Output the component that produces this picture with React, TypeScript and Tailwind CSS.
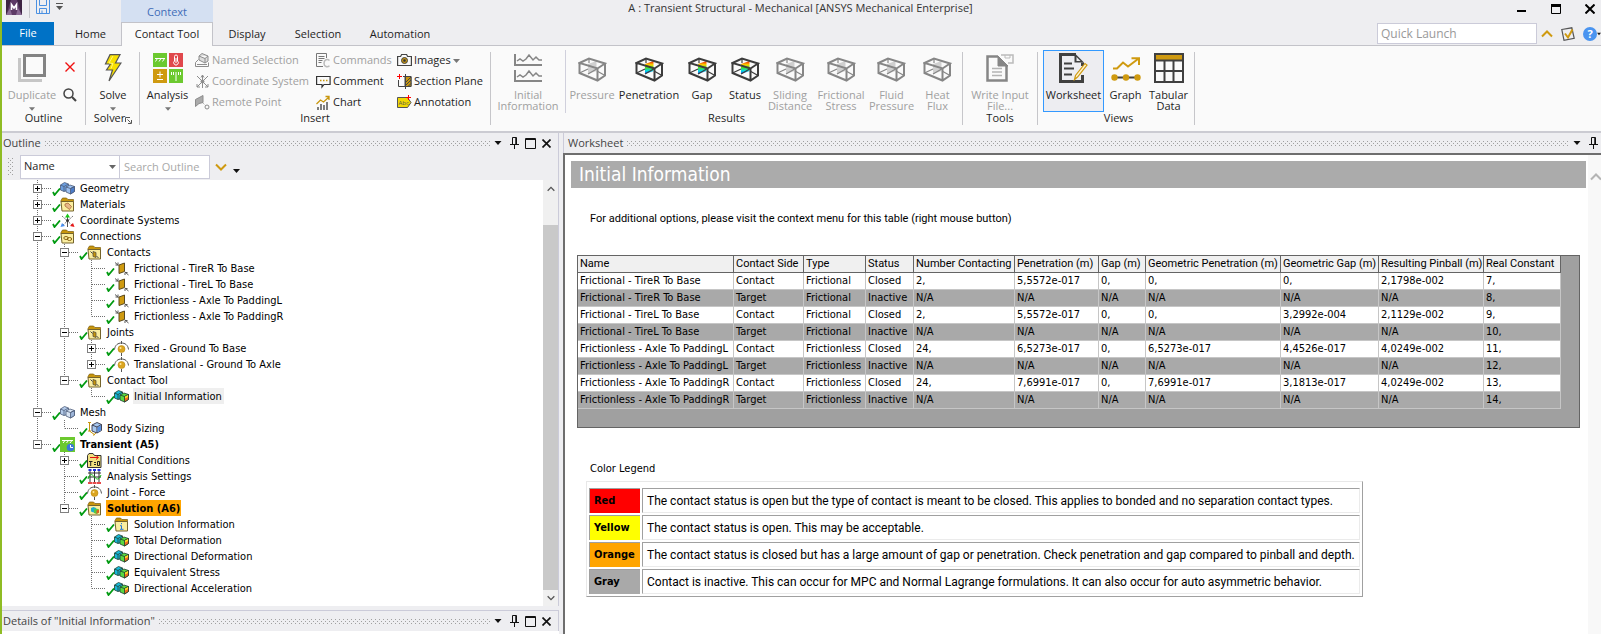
import React from "react";
import clsx from "clsx";

const UI = "font-['Open_Sans','Noto_Sans',sans-serif]";
const BODY = "font-['DejaVu_Sans_Condensed','DejaVu_Sans',sans-serif]";
const NARROW = "font-['Roboto','Liberation_Sans',sans-serif]";

type IconProps = React.SVGProps<SVGSVGElement>;

/* ---------- title bar icons ---------- */

const AppLogo = () => (
  <svg aria-hidden="true" width="16" height="15" viewBox="0 0 16 15">
    <rect width="16" height="15" fill="#3d2443" />
    <path d="M0 15 5 0h6l5 15z" fill="#5d3a66" />
    <path d="M0 15 4 8l2 7zM16 15l-4-7-2 7z" fill="#8a6a94" />
    <path d="M5.500 10V4.500L8 8l2.500-3.500V10" fill="none" stroke="#fff" strokeWidth="1.600" />
  </svg>
);

const SaveIcon = () => (
  <svg aria-hidden="true" width="14" height="14" viewBox="0 0 14 14" fill="none" stroke="#4a90e2">
    <path d="M.5-1v14.500h13V-1M3.500-1v6.500h7V-1M3.500 13.500v-5h7v5M6 13v-2.500" />
  </svg>
);

const Arrow = ({ className }: { className?: string }) => (
  <svg aria-hidden="true" width="7" height="4" viewBox="0 0 7 4" className={className}>
    <path d="M0 0h7L3.500 4z" fill="currentColor" />
  </svg>
);

const Chevron = ({ className }: { className?: string }) => (
  <svg aria-hidden="true" width="12" height="8" viewBox="0 0 12 8" className={className}>
    <path d="M1 1.500 6 6.500l5-5" fill="none" stroke="currentColor" strokeWidth="2" />
  </svg>
);

/* ---------- ribbon icons ---------- */

const DuplicateIcon = () => (
  <svg aria-hidden="true" width="28" height="28" viewBox="0 0 28 28" fill="none">
    <path d="M1.500 4v22.500H24" stroke="#c6c6c6" strokeWidth="3" />
    <rect x="6.500" y="1.500" width="20" height="20" stroke="#838383" strokeWidth="3" />
  </svg>
);

const SolveIcon = () => (
  <svg aria-hidden="true" width="18" height="28" viewBox="0 0 18 28">
    <path
      d="M6 .7h10L11.500 9h5.500L5 27l3.500-11H2.500l4-6H1.500z"
      fill="#f8e000"
      stroke="#555"
      strokeWidth="1.200"
    />
    <path d="M9 2 5 9l4 .5-2 5" fill="none" stroke="#fff780" />
  </svg>
);

const AnalysisIcon = () => (
  <svg aria-hidden="true" width="30" height="30" viewBox="0 0 30 30" fill="none" stroke="#fff">
    <path d="M0 0h14v14H0z" fill="#6cc92f" stroke="none" />
    <path d="M16 0h14v14H16z" fill="#e0484c" stroke="none" />
    <path d="M0 16h14v14H0z" fill="#cf9a10" stroke="none" />
    <path d="M16 16h14v14H16z" fill="#6cc92f" stroke="none" />
    <path d="M2 5.500h10M4.500 5.500l-2 3M8 5.500l-2 3M11.500 5.500l-2 3" />
    <path d="M21.500 8V3.500a1.500 1.500 0 0 1 3 0V8a2.300 2.300 0 1 1-3 0M23 5v5" />
    <path d="M4 21.500h6M7 18.500v6M4 26.500h6" />
    <path d="M18.500 19v3M20.500 19v3M23 19v9M25.500 19v3M27.500 19v3" />
  </svg>
);

const NamedSelectionIcon = () => (
  <svg aria-hidden="true" width="15" height="15" viewBox="0 0 15 15" fill="none" stroke="#8c8c8c">
    <path d="m4 3 3-2.500 6 2.500v5l-3 2-6-3zM4 3l6 2.500L13 3M10 5.500V10" fill="#ddd" />
    <path d="M.5 9.500v4h13v-4M.5 9.500l3-3M2 11.500h10" />
  </svg>
);

const CoordinateIcon = () => (
  <svg aria-hidden="true" width="15" height="15" viewBox="0 0 15 15" fill="none" stroke="#8c8c8c">
    <path d="M7.500 1v13M2 2l11 11M13 2 2 13" />
    <path d="M6 3.500 7.500 1 9 3.500M10 13h3v-3M2 10v3h3" />
    <circle cx="7.500" cy="7.500" r="1.500" fill="#8c8c8c" />
  </svg>
);

const RemotePointIcon = () => (
  <svg aria-hidden="true" width="15" height="15" viewBox="0 0 15 15" fill="none" stroke="#8c8c8c">
    <path d="M.5 4.500 8 .5v7l-4 1-3.500 3z" fill="#aaa" />
    <path d="m7 7 3.500 3.500" strokeDasharray="1 1" />
    <circle cx="12" cy="12" r="2" />
  </svg>
);

const CommandsIcon = () => (
  <svg aria-hidden="true" width="15" height="15" viewBox="0 0 15 15" fill="none" stroke="#777">
    <path d="M7 13.500H.5V.5h10V5" />
    <path d="M2.500 3.500h6M2.500 5.500h6M2.500 7.500h4M2.500 9.500h3" />
    <path d="M13.500 7.500c-2-2-5.500-1-5.500 2.700s3.500 4.300 5.500 2.500" stroke="#bbb" strokeWidth="1.500" />
  </svg>
);

const CommentIcon = () => (
  <svg aria-hidden="true" width="15" height="15" viewBox="0 0 15 15" fill="none" stroke="#333">
    <path d="M.6 2.500h13.500v8H8l-2 2.500v-2.500H.6z" strokeWidth="1.200" />
    <path d="M4 6.500h1.500M7 6.500h1.500M10 6.500h1.500" stroke="#c8960c" strokeWidth="1.500" />
  </svg>
);

const ChartIcon = () => (
  <svg aria-hidden="true" width="15" height="15" viewBox="0 0 15 15" fill="none" stroke="#555">
    <path d="M2 15v-3M5 15V9M8 15v-5M11 15V7" strokeWidth="1.500" />
    <path d="m.5 9 4-4 3 2 5.500-5M9.500 1.500H13V5" stroke="#c8960c" strokeWidth="1.300" />
  </svg>
);

const ImagesIcon = () => (
  <svg aria-hidden="true" width="15" height="15" viewBox="0 0 15 15" fill="none" stroke="#444">
    <path d="M.6 3.500h3l1-2h5l1 2h3.800v9H.6z" strokeWidth="1.200" />
    <circle cx="7.500" cy="7.500" r="3" fill="#c8960c" />
    <circle cx="7.500" cy="7.500" r="1" fill="#333" />
  </svg>
);

const SectionPlaneIcon = () => (
  <svg aria-hidden="true" width="15" height="15" viewBox="0 0 15 15" fill="none" stroke="#444">
    <path d="M1.500 6v6.500h12.500V2.500H6" />
    <path d="M8 2.500h6v10H8z" fill="#c8960c" />
    <path d="m8 9 6-6M8 12l6-6M11 12.500l3-3M8.500 0v15" />
    <path d="M2.500 0v5M0 2.500h5" stroke="#f00" />
  </svg>
);

const AnnotationIcon = () => (
  <svg aria-hidden="true" width="15" height="15" viewBox="0 0 15 15">
    <path d="M.5 2.500h10l3.500 5-3.500 5H.5z" fill="#f0d800" stroke="#555" />
    <text x="1.500" y="10" fontSize="6" fill="#555" fontFamily="Open Sans">
      Abc
    </text>
    <path d="M11.500 0v5M9 2.500h5" stroke="#f00" />
  </svg>
);

const InitialInfoIcon = () => (
  <svg aria-hidden="true" width="28" height="28" viewBox="0 0 28 28" fill="none" stroke="#868686">
    <path d="M1 0v11h27M1 16v11h27" strokeWidth="2" />
    <path d="m3 7 3-2 3 2 3-2 3-4 4 5 3-3 3 3h3M3 23l3-2 3 2 3-2 3-4 4 5 3-3 3 3h3" strokeWidth="1.500" />
  </svg>
);

const ResultIcon = ({ disabled }: { disabled?: boolean }) => (
  <svg
    aria-hidden="true"
    width="29"
    height="27"
    viewBox="0 -2 29 27"
    fill="none"
    stroke={disabled ? "#868686" : "#3c3c3c"}
  >
    <defs>
      <linearGradient id="contour" x1="0" y1="0" x2="0" y2="1">
        <stop offset="0.05" stopColor="#f03000" />
        <stop offset="0.3" stopColor="#ffd800" />
        <stop offset="0.5" stopColor="#50d820" />
        <stop offset="0.75" stopColor="#00e0e8" />
        <stop offset="1" stopColor="#2040f0" />
      </linearGradient>
    </defs>
    <path d="M10 7 18.500 4v10L10 17z" fill={disabled ? "#d0d0d0" : "url(#contour)"} stroke="none" />
    <path d="M1.500 6 11 1.500 27 6.500 19.500 11.500zM1.500 6v10l18 7.500 7.500-5v-12M19.500 11.500v12" strokeWidth="2" />
    <path d="M11 1.500V6M1.500 16 10 12M19 14l8 4.500M10 17l9.500-5.500" strokeWidth="1.200" />
  </svg>
);

const WriteInputIcon = () => (
  <svg aria-hidden="true" width="28" height="28" viewBox="0 0 28 28" fill="none" stroke="#868686">
    <path d="M15 1h12v8h-5" stroke="#bbb" strokeWidth="1.500" />
    <path d="M19 1v3h5V1" stroke="#bbb" />
    <path d="M12 2.500H1.500v24h19V12" strokeWidth="2.500" />
    <path d="M12 2v10h10z" fill="#868686" />
    <path d="M6 14.500h10M6 18h10M6 21.500h10" stroke="#b4b4b4" strokeWidth="1.500" />
  </svg>
);

const WorksheetIcon = () => (
  <svg aria-hidden="true" width="29" height="30" viewBox="0 0 29 30" fill="none" stroke="#404040">
    <path d="M17 1.500H1.500v27h22V22M23.500 9.500V13" strokeWidth="3" />
    <path d="M15.500 0 25 9.500h-9.500z" fill="#404040" stroke="none" />
    <path d="m17.500 4 4 4h-4z" fill="#eee" stroke="none" />
    <path d="M5 10.500h8M5 15.500h10M5 21.500h8" strokeWidth="2" />
    <path d="m15.500 26.500 1-4L26 10.500l2 1.500-9.500 12z" fill="#fff3cf" stroke="#cf9a10" strokeWidth="1.200" />
  </svg>
);

const GraphIcon = () => (
  <svg aria-hidden="true" width="30" height="27" viewBox="0 -2 30 27" fill="none" stroke="#cf9a10">
    <path d="m2 11.500 4 0 6-6 5 4L27 2M20.500 1.200H28V8" strokeWidth="2" />
    <path d="M3 20.500h24" stroke="#404040" strokeWidth="2" />
    <g fill="#cf9a10" stroke="none">
      <circle cx="3.500" cy="20.500" r="3.200" />
      <circle cx="15" cy="20.500" r="3.200" />
      <circle cx="26.500" cy="20.500" r="3.200" />
    </g>
  </svg>
);

const TabularIcon = () => (
  <svg aria-hidden="true" width="30" height="30" viewBox="0 0 30 30" fill="none" stroke="#404040">
    <path d="M1 1h28v6H1z" fill="#cf9a10" stroke="none" />
    <path d="M1 1h28v28H1zM1 7.500h28M1 18h28M10.500 8v21M19.500 8v21" strokeWidth="2" />
  </svg>
);

/* ---------- outline tree icons ---------- */

const TreeSvg = ({ children, ...props }: IconProps) => (
  <svg
    aria-hidden="true"
    width="15"
    height="15"
    viewBox="0 0 15 15"
    fill="none"
    className="mt-px shrink-0"
    {...props}
  >
    {children}
  </svg>
);

const Folder = ({ children }: { children?: React.ReactNode }) => (
  <TreeSvg>
    <path d="M1 3.500 2.500 1h4L8 2.500h5.500V5H1z" fill="#c8960c" stroke="#7a5c10" strokeWidth=".7" />
    <path d="M1 4.500h12.500v9.500H2z" fill="#fbeea0" stroke="#75642c" />
    {children}
  </TreeSvg>
);

const ContactGlyph = () => (
  <>
    <path d="m6 6.500 3 1v5l-3-1z" fill="#c8960c" stroke="#444" strokeWidth=".7" />
    <path d="m3.500 6.500 2 2M9.500 11l2 2" stroke="#444" />
  </>
);

const Blocks = ({ light, rainbow }: { light?: boolean; rainbow?: boolean }) => {
  const left = rainbow ? "#18b8d8" : light ? "#b4cbea" : "#6c9fe0";
  const mid = rainbow ? "#58d840" : light ? "#d8e4f4" : "#9cc0f0";
  const right = rainbow ? "#f06820" : light ? "#9cb4d8" : "#4c7cc8";
  return (
    <TreeSvg strokeWidth=".8" strokeLinejoin="round" stroke={rainbow ? "#204030" : "#4c5c78"}>
      <path d="m.5 4 4-2.500 4 1.500v6L4 10.500.5 9z" fill={left} />
      <path d="m.5 4 3.500 1.500L8.500 3M4 5.500v5" />
      <path d="m6 6 4-2 4.500 1.500v5L10.500 13 6 11z" fill={mid} />
      <path d="M10.500 7.500V13l4-2.500v-5z" fill={right} />
      <path d="m6 6 4.500 1.500 4-2" />
      {rainbow && <path d="m11 7.500 3-1.500v2l-3 1.500z" fill="#f8e020" stroke="none" />}
    </TreeSvg>
  );
};

const JointIcon = () => (
  <TreeSvg stroke="#555">
    <path d="M.5 8.500C1 4 4 2 7.500 2s6.500 2 7 6.500M7.500 0v3M7.500 12v3" />
    <circle cx="7.500" cy="8" r="3.500" fill="#dba520" stroke="#b88a10" strokeWidth=".6" />
    <circle cx="6.500" cy="7" r="1" fill="#ffe9a0" stroke="none" />
  </TreeSvg>
);

const ICONS = {
  geometry: <Blocks />,
  mesh: <Blocks light />,
  result: <Blocks rainbow />,
  joint: <JointIcon />,
  materials: (
    <Folder>
      <path d="m5 7 3-1 3.500 3.500-2 3L5 9z" fill="#e8b888" stroke="#a06030" strokeWidth=".7" />
    </Folder>
  ),
  coordinates: (
    <TreeSvg>
      <path d="m2 3 11 10M13 3 2 13" stroke="#777" strokeDasharray="2 1" />
      <path d="M7.500 14V4" stroke="#555" />
      <path d="M5 4.500 7.500.5l2.500 4z" fill="#18c818" />
      <path d="M14.500 14 10 13l3-3z" fill="#e81818" />
      <path d="M.5 14 5 13l-3-3z" fill="#4890f0" />
      <circle cx="7.500" cy="7.500" r="1.500" fill="#333" />
    </TreeSvg>
  ),
  connections: (
    <Folder>
      <ellipse cx="6" cy="9" rx="2.200" ry="1.500" stroke="#8a6410" />
      <ellipse cx="9.500" cy="10" rx="2.200" ry="1.500" stroke="#8a6410" />
    </Folder>
  ),
  contactFolder: (
    <Folder>
      <ContactGlyph />
    </Folder>
  ),
  contact: (
    <TreeSvg stroke="#555">
      <path d="m1 1.500 3.500 3M11 11l3.500 3" />
      <path d="M4 1.500V4H1.500M11 14v-2.500h2.500" />
      <path d="m5 4 5.500-2v8.500L5 12.500z" fill="#cf9a10" stroke="#5a4a20" />
    </TreeSvg>
  ),
  sizing: (
    <TreeSvg>
      <path d="M1 1.500h3M2.500 1.500V10L8 14M1 10h3M6 14.500 9 12" stroke="#c8960c" />
      <path d="m5 4 5-2.500 4.500 2v6L10 12 5 10z" fill="#a8c8f0" stroke="#334" strokeWidth=".9" />
      <path d="m5 4 5 2 4.500-2.500M10 6v6" stroke="#334" strokeWidth=".9" />
      <path d="m10.500 6.500 3.500-2v4.800l-3.500 2z" fill="#5890e0" />
    </TreeSvg>
  ),
  transient: (
    <TreeSvg>
      <path d="M0 0h15v15H0z" fill="#6cc92f" />
      <path d="M2 3.500h11M5 3.500l-2 2.500M8.500 3.500l-2 2.500M12 3.500 10 6" stroke="#fff" />
      <circle cx="10.500" cy="10.500" r="3.800" fill="#3c78d8" />
      <path d="M10.500 8v2.500H13" stroke="#fff" />
    </TreeSvg>
  ),
  initial: (
    <TreeSvg>
      <path d="M.5 14.500v-12L2 .5h4l1.500 2h6.500v12z" fill="#f0e080" stroke="#333" />
      <path d="M3 4.500h8M9 2.500l2.500 2L9 6.500" stroke="#e01010" />
      <path d="M2 8.500h3.500M3.700 8.500v4.500M7 9.500h2M7 11.500h2M10.500 8.500h2v4h-2z" stroke="#222" />
    </TreeSvg>
  ),
  settings: (
    <TreeSvg>
      <path d="M3 2v11M7.500 2v11M12 2v11M1 8h13M1 4h13" stroke="#333" />
      <path d="M1.500 1h3M6 1h3M10.500 1h3" stroke="#2030e0" strokeWidth="2" />
      <path d="M1 10c2-6 4-5 6.500-2S12 11 14 6" stroke="#10b810" />
      <path d="M1 14h4M5.500 14h4M10 14h4" stroke="#e01010" strokeWidth="1.500" />
    </TreeSvg>
  ),
  solution: (
    <Folder>
      <path d="m4 7 2.500-1L9 7v3.500l-2.500 1L4 10.500z" fill="#20b0c8" />
      <path d="m7 8.500 2.500-1 2.500 1v3L9.500 13 7 12z" fill="#58c840" />
      <path d="m9.500 9.500 2.500-1v3L9.500 13z" fill="#e06020" />
    </Folder>
  ),
  info: (
    <Folder>
      <path d="M7.500 6v1.200M6 8.700h1.500V12M6 12.300h3.500" stroke="#2878d8" />
    </Folder>
  ),
};

const CheckMark = () => (
  <svg aria-hidden="true" width="9" height="8" viewBox="0 0 9 8" fill="none" className="mt-2 ml-px -mr-px shrink-0">
    <path d="m1 4 1.500 3L8 .5" stroke="#009a10" strokeWidth="1.800" />
  </svg>
);

/* ---------- outline tree ---------- */

type TreeNode = {
  label: string;
  icon: keyof typeof ICONS;
  children?: TreeNode[];
  collapsed?: boolean;
  look?: "selected" | "bold" | "solution";
};

const TREE: TreeNode[] = [
  { label: "Geometry", icon: "geometry", collapsed: true },
  { label: "Materials", icon: "materials", collapsed: true },
  { label: "Coordinate Systems", icon: "coordinates", collapsed: true },
  {
    label: "Connections",
    icon: "connections",
    children: [
      {
        label: "Contacts",
        icon: "contactFolder",
        children: [
          { label: "Frictional - TireR To Base", icon: "contact" },
          { label: "Frictional - TireL To Base", icon: "contact" },
          { label: "Frictionless - Axle To PaddingL", icon: "contact" },
          { label: "Frictionless - Axle To PaddingR", icon: "contact" },
        ],
      },
      {
        label: "Joints",
        icon: "contactFolder",
        children: [
          { label: "Fixed - Ground To Base", icon: "joint", collapsed: true },
          { label: "Translational - Ground To Axle", icon: "joint", collapsed: true },
        ],
      },
      {
        label: "Contact Tool",
        icon: "contactFolder",
        children: [{ label: "Initial Information", icon: "result", look: "selected" }],
      },
    ],
  },
  { label: "Mesh", icon: "mesh", children: [{ label: "Body Sizing", icon: "sizing" }] },
  {
    label: "Transient (A5)",
    icon: "transient",
    look: "bold",
    children: [
      { label: "Initial Conditions", icon: "initial", collapsed: true },
      { label: "Analysis Settings", icon: "settings" },
      { label: "Joint - Force", icon: "joint" },
      {
        label: "Solution (A6)",
        icon: "solution",
        look: "solution",
        children: [
          { label: "Solution Information", icon: "info" },
          { label: "Total Deformation", icon: "result" },
          { label: "Directional Deformation", icon: "result" },
          { label: "Equivalent Stress", icon: "result" },
          { label: "Directional Acceleration", icon: "result" },
        ],
      },
    ],
  },
];

const Guide = ({ path, sign }: { path: string; sign?: "+" | "-" }) => (
  <svg aria-hidden="true" width="27" height="16" viewBox="0 0 27 16" fill="none" className="block">
    <path d={path} stroke="#707070" strokeDasharray="1 1" />
    {sign && (
      <>
        <rect x="9.500" y="4.500" width="8" height="8" fill="#fff" stroke="#808080" />
        <path d={sign === "+" ? "M11 8.500h5M13.500 6v5" : "M11 8.500h5"} stroke="#000" />
      </>
    )}
  </svg>
);

function TreeItem({ node, guides, last }: { node: TreeNode; guides: boolean[]; last: boolean }) {
  const sign = node.collapsed ? "+" : node.children ? "-" : undefined;
  const path = last ? "M13.500 0v8.500M14 8.500h13" : "M13.500 0v16M14 8.500h13";

  return (
    <li role="treeitem" aria-expanded={sign ? sign === "-" : undefined}>
      <div className="flex h-4 items-stretch">
        {guides.map((open, i) => (
          <Guide key={i} path={open ? "M13.500 0v16" : ""} />
        ))}
        {sign ? (
          <button type="button" aria-label={`Toggle ${node.label}`}>
            <Guide path={path} sign={sign} />
          </button>
        ) : (
          <Guide path={path} />
        )}
        <CheckMark />
        {ICONS[node.icon]}
        <span
          className={clsx("ml-1 px-px leading-[18px] whitespace-nowrap", {
            "bg-[#efefef] pr-0.5": node.look === "selected",
            "font-bold": node.look === "bold",
            "bg-[#ffa500] px-0.5 font-bold": node.look === "solution",
          })}
        >
          {node.label}
        </span>
      </div>
      {node.children && (
        <ul role="group">
          {node.children.map((child, i) => (
            <TreeItem
              key={child.label}
              node={child}
              guides={[...guides, !last]}
              last={i === node.children!.length - 1}
            />
          ))}
        </ul>
      )}
    </li>
  );
}

/* ---------- ribbon ---------- */

interface RibbonButtonProps {
  icon: React.ReactNode;
  lines: string[];
  width: string;
  disabled?: boolean;
  active?: boolean;
  menu?: boolean;
}

function RibbonButton({ icon, lines, width, disabled, active, menu }: RibbonButtonProps) {
  return (
    <button
      type="button"
      disabled={disabled}
      className={clsx(
        "flex h-[62px] shrink-0 flex-col items-center",
        width,
        disabled ? "text-[#a0a0a0]" : "text-[#1e1e1e]",
        active && "bg-[#ededf1] outline -outline-offset-1 outline-[#3399ff]"
      )}
    >
      <span className="flex h-[39px] shrink-0 items-center pb-[3px]">{icon}</span>
      {lines.map((line) => (
        <span key={line} className="leading-[11px] whitespace-nowrap">
          {line}
        </span>
      ))}
      {menu && <Arrow className="mt-[7px] w-[6px] shrink-0 text-[#777]" />}
    </button>
  );
}

function SmallButton({
  icon,
  label,
  disabled,
  menu,
}: {
  icon: React.ReactNode;
  label: string;
  disabled?: boolean;
  menu?: boolean;
}) {
  return (
    <button
      type="button"
      disabled={disabled}
      className={clsx(
        "flex h-[21px] items-center gap-0.5 whitespace-nowrap",
        disabled ? "text-[#a0a0a0]" : "text-[#1e1e1e]"
      )}
    >
      {icon}
      {label}
      {menu && <Arrow className="text-[#777]" />}
    </button>
  );
}

function RibbonGroup({
  label,
  className,
  launcher,
  children,
}: {
  label: string;
  className: string;
  launcher?: boolean;
  children: React.ReactNode;
}) {
  return (
    <>
      <section aria-label={label} className={clsx("flex shrink-0 flex-col", className)}>
        <div className="flex h-[62px]">{children}</div>
        <div className="flex h-3 items-center justify-center text-[#1e1e1e]">
          {label}
          {launcher && (
            <svg aria-hidden="true" width="7" height="7" viewBox="0 0 7 7" className="mt-1" fill="none">
              <path d="M.5 5V.5H5M2.500 2.500l3 3M6.500 3v3.500H3" stroke="#555" />
            </svg>
          )}
        </div>
      </section>
      <div className="mt-0.5 h-[73px] w-px shrink-0 bg-[#c6c6ca]" />
    </>
  );
}

const RESULTS = [
  { lines: ["Pressure"], width: "w-[52px]", disabled: true },
  { lines: ["Penetration"], width: "w-[62px]" },
  { lines: ["Gap"], width: "w-[44px]" },
  { lines: ["Status"], width: "w-[42px]" },
  { lines: ["Sliding", "Distance"], width: "w-[48px]", disabled: true },
  { lines: ["Frictional", "Stress"], width: "w-[54px]", disabled: true },
  { lines: ["Fluid", "Pressure"], width: "w-[47px]", disabled: true },
  { lines: ["Heat", "Flux"], width: "w-[45px]", disabled: true },
];

function Ribbon() {
  return (
    <div className="flex h-[87px] shrink-0 border-b-2 border-[#cbcbd2] bg-[#fafafa] pt-1">
      <RibbonGroup label="Outline" className="w-[83px]">
        <RibbonButton icon={<DuplicateIcon />} lines={["Duplicate"]} width="w-[60px]" disabled menu />
        <div className="flex w-4 flex-col items-center">
          <button type="button" aria-label="Delete" className="mt-3">
            <svg width="10" height="10" viewBox="0 0 10 10">
              <path d="m.5.5 9 9M9.500.5l-9 9" stroke="#f01010" strokeWidth="1.400" />
            </svg>
          </button>
          <button type="button" aria-label="Find" className="mt-4">
            <svg width="14" height="14" viewBox="0 0 14 14" fill="none" stroke="#444">
              <circle cx="5.500" cy="5.500" r="4.500" strokeWidth="1.500" />
              <path d="m9 9 4 4" strokeWidth="2.200" />
            </svg>
          </button>
        </div>
      </RibbonGroup>
      <RibbonGroup label="Solver" className="w-[53px] pl-px" launcher>
        <RibbonButton icon={<SolveIcon />} lines={["Solve"]} width="w-full" menu />
      </RibbonGroup>
      <RibbonGroup label="Insert" className="w-[350px]">
        <RibbonButton icon={<AnalysisIcon />} lines={["Analysis"]} width="w-[55px]" menu />
        <div className="w-[121px]">
          <SmallButton icon={<NamedSelectionIcon />} label="Named Selection" disabled />
          <SmallButton icon={<CoordinateIcon />} label="Coordinate System" disabled />
          <SmallButton icon={<RemotePointIcon />} label="Remote Point" disabled />
        </div>
        <div className="w-[81px]">
          <SmallButton icon={<CommandsIcon />} label="Commands" disabled />
          <SmallButton icon={<CommentIcon />} label="Comment" />
          <SmallButton icon={<ChartIcon />} label="Chart" />
        </div>
        <div>
          <SmallButton icon={<ImagesIcon />} label="Images" menu />
          <SmallButton icon={<SectionPlaneIcon />} label="Section Plane" />
          <SmallButton icon={<AnnotationIcon />} label="Annotation" />
        </div>
      </RibbonGroup>
      <RibbonGroup label="Results" className="w-[471px]">
        <RibbonButton icon={<InitialInfoIcon />} lines={["Initial", "Information"]} width="w-[74px]" disabled />
        <div className="h-[63px] w-px bg-[#d0d0dc]" />
        {RESULTS.map((item) => (
          <RibbonButton
            key={item.lines.join(" ")}
            icon={<ResultIcon disabled={item.disabled} />}
            lines={item.lines}
            width={item.width}
            disabled={item.disabled}
          />
        ))}
      </RibbonGroup>
      <RibbonGroup label="Tools" className="w-[74px]">
        <RibbonButton icon={<WriteInputIcon />} lines={["Write Input", "File..."]} width="w-full" disabled />
      </RibbonGroup>
      <RibbonGroup label="Views" className="w-[156px] pl-[5px]">
        <RibbonButton icon={<WorksheetIcon />} lines={["Worksheet"]} width="w-[61px]" active />
        <RibbonButton icon={<GraphIcon />} lines={["Graph"]} width="w-[43px]" />
        <RibbonButton icon={<TabularIcon />} lines={["Tabular", "Data"]} width="w-[43px]" />
      </RibbonGroup>
    </div>
  );
}

function TitleBar() {
  return (
    <header className="flex h-[22px] shrink-0">
      <div className="flex flex-1">
        <div className="flex w-[119px] items-start pl-1">
          <AppLogo />
          <div className="mr-1.5 ml-[7px] h-[18px] w-px bg-[#c8c8cc]" />
          <button type="button" aria-label="Save">
            <SaveIcon />
          </button>
          <button type="button" aria-label="Customize toolbar" className="mt-[3px] ml-1.5 text-[#555]">
            <span className="mb-0.5 block h-px w-[7px] bg-[#555]" />
            <Arrow />
          </button>
        </div>
        <div className="w-[92px] bg-[#d4e0f2] text-center leading-6 text-[#3f6db8]">Context</div>
      </div>
      <h1 className="pl-1 text-[11px] leading-4 text-[#333]">
        A : Transient Structural - Mechanical [ANSYS Mechanical Enterprise]
      </h1>
      <div className="flex flex-1 items-start justify-end gap-6 pt-1 pr-1.5 text-black">
        <button type="button" aria-label="Minimize">
          <svg width="10" height="10" viewBox="0 0 10 10">
            <path d="M0 7h9" stroke="currentColor" strokeWidth="2" />
          </svg>
        </button>
        <button type="button" aria-label="Maximize">
          <svg width="10" height="10" viewBox="0 0 10 10" fill="none" stroke="currentColor">
            <path d="M.5.5h9v9h-9z" />
            <path d="M0 1.500h10" strokeWidth="3" />
          </svg>
        </button>
        <button type="button" aria-label="Close">
          <svg width="10" height="10" viewBox="0 0 10 10">
            <path d="m.5.5 9 9M9.500.5l-9 9" stroke="currentColor" strokeWidth="2" />
          </svg>
        </button>
      </div>
    </header>
  );
}

function TabStrip() {
  return (
    <nav className="flex h-6 shrink-0 border-b border-[#c3c3c9] text-[11px] text-[#1e1e1e]">
      <button type="button" className="w-[52px] bg-[#0072c6] text-white">
        File
      </button>
      <button type="button" className="ml-1.5 w-[61px] pt-0.5">
        Home
      </button>
      <button
        type="button"
        aria-current="page"
        className="-mb-px w-[92px] border border-b-0 border-[#c3c3c9] bg-[#fafafa]"
      >
        Contact Tool
      </button>
      <button type="button" className="w-[68px] pt-0.5">
        Display
      </button>
      <button type="button" className="w-[74px] pt-0.5">
        Selection
      </button>
      <button type="button" className="w-[90px] pt-0.5">
        Automation
      </button>
      <div className="ml-auto flex items-center">
        <input
          type="text"
          aria-label="Quick Launch"
          placeholder="Quick Launch"
          className="h-[21px] w-[160px] border border-[#cbcbd9] bg-white px-[3px] text-[12px] placeholder:text-[#999]"
        />
        <button type="button" aria-label="Collapse ribbon" className="ml-1 text-[#cf9a10]">
          <Chevron className="rotate-180" />
        </button>
        <button type="button" aria-label="Options" className="ml-2">
          <svg width="14" height="14" viewBox="0 0 14 14" fill="none">
            <path d="m.8 2.500 10-1.700 2.400 10.500-10.200 2z" stroke="#555" strokeWidth="1.200" />
            <path d="m4 6.500 3 4 4.500-8" stroke="#cf9a10" strokeWidth="2" />
          </svg>
        </button>
        <button
          type="button"
          aria-label="Help"
          className="ml-2 h-[14px] w-[14px] rounded-full bg-[#4a94f0] text-[11px] leading-[14px] font-bold text-white"
        >
          ?
        </button>
        <Arrow className="w-1" />
      </div>
    </nav>
  );
}

/* ---------- docked panels ---------- */

const Pin = () => (
  <svg width="9" height="12" viewBox="0 0 9 12" fill="none" stroke="currentColor">
    <path d="M2.500 7V.5h4V7M0 7.500h9M4.500 8v4" />
    <path d="M6 1v6" strokeWidth="1.500" />
  </svg>
);

function PanelHeader({ title, full }: { title: string; full?: boolean }) {
  return (
    <div
      className={clsx(
        "flex h-5 shrink-0 items-center text-[#444]",
        full ? "pr-[7px] pl-px" : "pr-[3px] pl-1"
      )}
    >
      <h2 className="text-[11px] whitespace-nowrap">{title}</h2>
      <svg aria-hidden="true" height="5" className="mx-1 w-full min-w-0 flex-1">
        <rect width="100%" height="5" fill="url(#grip)" />
      </svg>
      <div className="flex items-center gap-2 text-[#111]">
        <button type="button" aria-label={`${title} menu`}>
          <Arrow className="w-2" />
        </button>
        <button type="button" aria-label={`Pin ${title}`}>
          <Pin />
        </button>
        {full && (
          <>
            <button type="button" aria-label={`Maximize ${title}`} className="-ml-0.5">
              <svg width="11" height="11" viewBox="0 0 11 11" fill="none" stroke="currentColor">
                <path d="M.5.5h10v10H.5zM0 1.500h11" />
              </svg>
            </button>
            <button type="button" aria-label={`Close ${title}`} className="-ml-0.5">
              <svg width="9" height="9" viewBox="0 0 9 9">
                <path d="m.5.5 8 8M8.500.5l-8 8" stroke="currentColor" strokeWidth="1.700" />
              </svg>
            </button>
          </>
        )}
      </div>
    </div>
  );
}

function OutlinePanel() {
  return (
    <aside className="flex w-[557px] shrink-0 flex-col">
      <div className="flex flex-1 flex-col border-r border-[#cbcbd9]">
        <PanelHeader title="Outline" full />
        <div className="flex h-[27px] shrink-0 items-center pl-1.5">
          <svg aria-hidden="true" width="6" height="17">
            <rect width="6" height="17" fill="url(#grip)" />
          </svg>
          <div className="relative ml-1.5">
            <select
              aria-label="Filter by"
              className="h-6 w-[100px] appearance-none border border-[#cbcbd9] bg-white px-[3px] text-[#1e1e1e]"
            >
              <option>Name</option>
            </select>
            <Arrow className="pointer-events-none absolute top-2.5 right-1 text-[#666]" />
          </div>
          <input
            type="text"
            aria-label="Search Outline"
            placeholder="Search Outline"
            className="h-6 w-[90px] border border-l-0 border-[#cbcbd9] bg-white px-1 placeholder:text-[#a8a8a8]"
          />
          <button type="button" aria-label="Expand filters" className="ml-[5px] text-[#cf9a10]">
            <Chevron />
          </button>
          <button type="button" aria-label="More filters" className="mt-2 ml-1.5 text-[#111]">
            <Arrow />
          </button>
        </div>
        <div className="flex flex-1 bg-white">
          <ul role="tree" className={clsx("flex-1 pb-2.5 pl-[22px] text-[11px] text-black", BODY)}>
            {TREE.map((node, i) => (
              <TreeItem key={node.label} node={node} guides={[]} last={i === TREE.length - 1} />
            ))}
          </ul>
          <div className="flex w-[15px] flex-col items-center bg-[#f0f0f0] text-[#555]">
            <Chevron className="mt-[5px] w-2 rotate-180" />
            <div className="mt-8 w-full flex-1 bg-[#c9c9c9]" />
            <Chevron className="my-1 w-2" />
          </div>
        </div>
      </div>
      <div className="mt-1 border-t border-r border-[#cbcbd9]">
        <PanelHeader title={'Details of "Initial Information"'} full />
      </div>
      <div className="h-1 bg-white" />
    </aside>
  );
}

/* ---------- worksheet ---------- */

const COLUMNS = [
  { title: "Name", width: "w-[156px]" },
  { title: "Contact Side", width: "w-[70px]" },
  { title: "Type", width: "w-[62px]" },
  { title: "Status", width: "w-[48px]" },
  { title: "Number Contacting", width: "w-[101px]" },
  { title: "Penetration (m)", width: "w-[84px]" },
  { title: "Gap (m)", width: "w-[47px]" },
  { title: "Geometric Penetration (m)", width: "w-[135px]" },
  { title: "Geometric Gap (m)", width: "w-[98px]" },
  { title: "Resulting Pinball (m)", width: "w-[105px]" },
  { title: "Real Constant", width: "w-[77px]" },
];

const NA = ["N/A", "N/A", "N/A", "N/A", "N/A", "N/A"];

const ROWS = [
  ["Frictional - TireR To Base", "Contact", "Frictional", "Closed", "2,", "5,5572e-017", "0,", "0,", "0,", "2,1798e-002", "7,"],
  ["Frictional - TireR To Base", "Target", "Frictional", "Inactive", ...NA, "8,"],
  ["Frictional - TireL To Base", "Contact", "Frictional", "Closed", "2,", "5,5572e-017", "0,", "0,", "3,2992e-004", "2,1129e-002", "9,"],
  ["Frictional - TireL To Base", "Target", "Frictional", "Inactive", ...NA, "10,"],
  ["Frictionless - Axle To PaddingL", "Contact", "Frictionless", "Closed", "24,", "6,5273e-017", "0,", "6,5273e-017", "4,4526e-017", "4,0249e-002", "11,"],
  ["Frictionless - Axle To PaddingL", "Target", "Frictionless", "Inactive", ...NA, "12,"],
  ["Frictionless - Axle To PaddingR", "Contact", "Frictionless", "Closed", "24,", "7,6991e-017", "0,", "7,6991e-017", "3,1813e-017", "4,0249e-002", "13,"],
  ["Frictionless - Axle To PaddingR", "Target", "Frictionless", "Inactive", ...NA, "14,"],
];

const LEGEND = [
  {
    name: "Red",
    color: "bg-[#ff0000]",
    text: "The contact status is open but the type of contact is meant to be closed. This applies to bonded and no separation contact types.",
  },
  {
    name: "Yellow",
    color: "bg-[#ffff00]",
    text: "The contact status is open. This may be acceptable.",
  },
  {
    name: "Orange",
    color: "bg-[#ffa500]",
    text: "The contact status is closed but has a large amount of gap or penetration. Check penetration and gap compared to pinball and depth.",
  },
  {
    name: "Gray",
    color: "bg-[#a9a9a9]",
    text: "Contact is inactive. This can occur for MPC and Normal Lagrange formulations. It can also occur for auto asymmetric behavior.",
  },
];

function ContactTable() {
  return (
    <div className="mt-7 mr-2 ml-3 border border-[#646464] bg-[#a0a0a0] pb-[18px]">
      <table className="w-[983px] table-fixed border-separate border-spacing-0 text-left">
        <thead>
          <tr>
            {COLUMNS.map((col) => (
              <th
                key={col.title}
                className={clsx(
                  "h-[17px] border-r border-b border-[#646464] bg-[#f0f0f0] p-0 pl-0.5 leading-4 font-normal whitespace-nowrap",
                  NARROW,
                  col.width
                )}
              >
                {col.title}
              </th>
            ))}
          </tr>
        </thead>
        <tbody>
          {ROWS.map((row, r) => (
            <tr key={r} className={r % 2 ? "bg-[#a9a9a9]" : "bg-white"}>
              {row.map((cell, c) => (
                <td
                  key={c}
                  className="h-[17px] border-r border-b border-[#c6c6c6] p-0 pl-0.5 leading-4 whitespace-nowrap"
                >
                  {cell}
                </td>
              ))}
            </tr>
          ))}
        </tbody>
      </table>
    </div>
  );
}

function WorksheetPanel() {
  return (
    <main className="ml-1 flex min-w-0 flex-1 flex-col border-l border-[#cbcbd9]">
      <PanelHeader title="Worksheet" />
      <div className="-ml-px flex flex-1 border-t-2 border-l-2 border-[#6e6e6e] bg-white">
        <div className={clsx("min-w-0 flex-1 pt-1.5 pb-9 text-[11px] text-black", BODY)}>
          <h2 className="mr-0.5 ml-1.5 h-[27px] bg-[#ababab] pl-2 text-[19px] leading-[27px] text-white">
            Initial Information
          </h2>
          <p className={clsx("mt-[23px] ml-[25px] leading-4", NARROW)}>
            For additional options, please visit the context menu for this table (right mouse button)
          </p>
          <ContactTable />
          <p className="mt-[33px] ml-[25px] leading-4">Color Legend</p>
          <table
            className={clsx(
              "mt-1 ml-[21px] border-separate border-spacing-[2px] border border-t-[#e8e8e8] border-r-[#a0a0a0] border-b-[#a0a0a0] border-l-[#e8e8e8] pt-1 text-[12px]",
              NARROW
            )}
          >
            <tbody>
              {LEGEND.map((row) => (
                <tr key={row.name}>
                  <th
                    scope="row"
                    className={clsx(
                      "h-[25px] w-[51px] border-t border-l border-[#a0a0a0] p-0 pl-1 text-left text-[11px] font-bold",
                      BODY,
                      row.color
                    )}
                  >
                    {row.name}
                  </th>
                  <td className="h-[25px] border border-t-[#a0a0a0] border-r-[#ebebeb] border-b-[#ebebeb] border-l-[#a0a0a0] p-0 px-1 whitespace-nowrap">
                    {row.text}
                  </td>
                </tr>
              ))}
            </tbody>
          </table>
        </div>
        <div className="w-[13px] overflow-hidden bg-[#f8f8f8] pt-[18px] pl-0.5 text-[#b4b4b4]">
          <Chevron className="rotate-180" />
        </div>
      </div>
    </main>
  );
}

export default function App() {
  return (
    <div
      className={clsx(
        "flex min-h-screen flex-col overflow-hidden border-l-2 border-[#8fbc24] bg-[#eeeef1] text-[11px]",
        UI
      )}
    >
      <svg aria-hidden="true" width="0" height="0" className="absolute">
        <pattern id="grip" width="4" height="4" patternUnits="userSpaceOnUse">
          <path d="M0 0h1v1H0zM2 2h1v1H2z" fill="#a0a0a0" />
        </pattern>
      </svg>
      <TitleBar />
      <TabStrip />
      <Ribbon />
      <div className="flex flex-1">
        <OutlinePanel />
        <WorksheetPanel />
      </div>
    </div>
  );
}
